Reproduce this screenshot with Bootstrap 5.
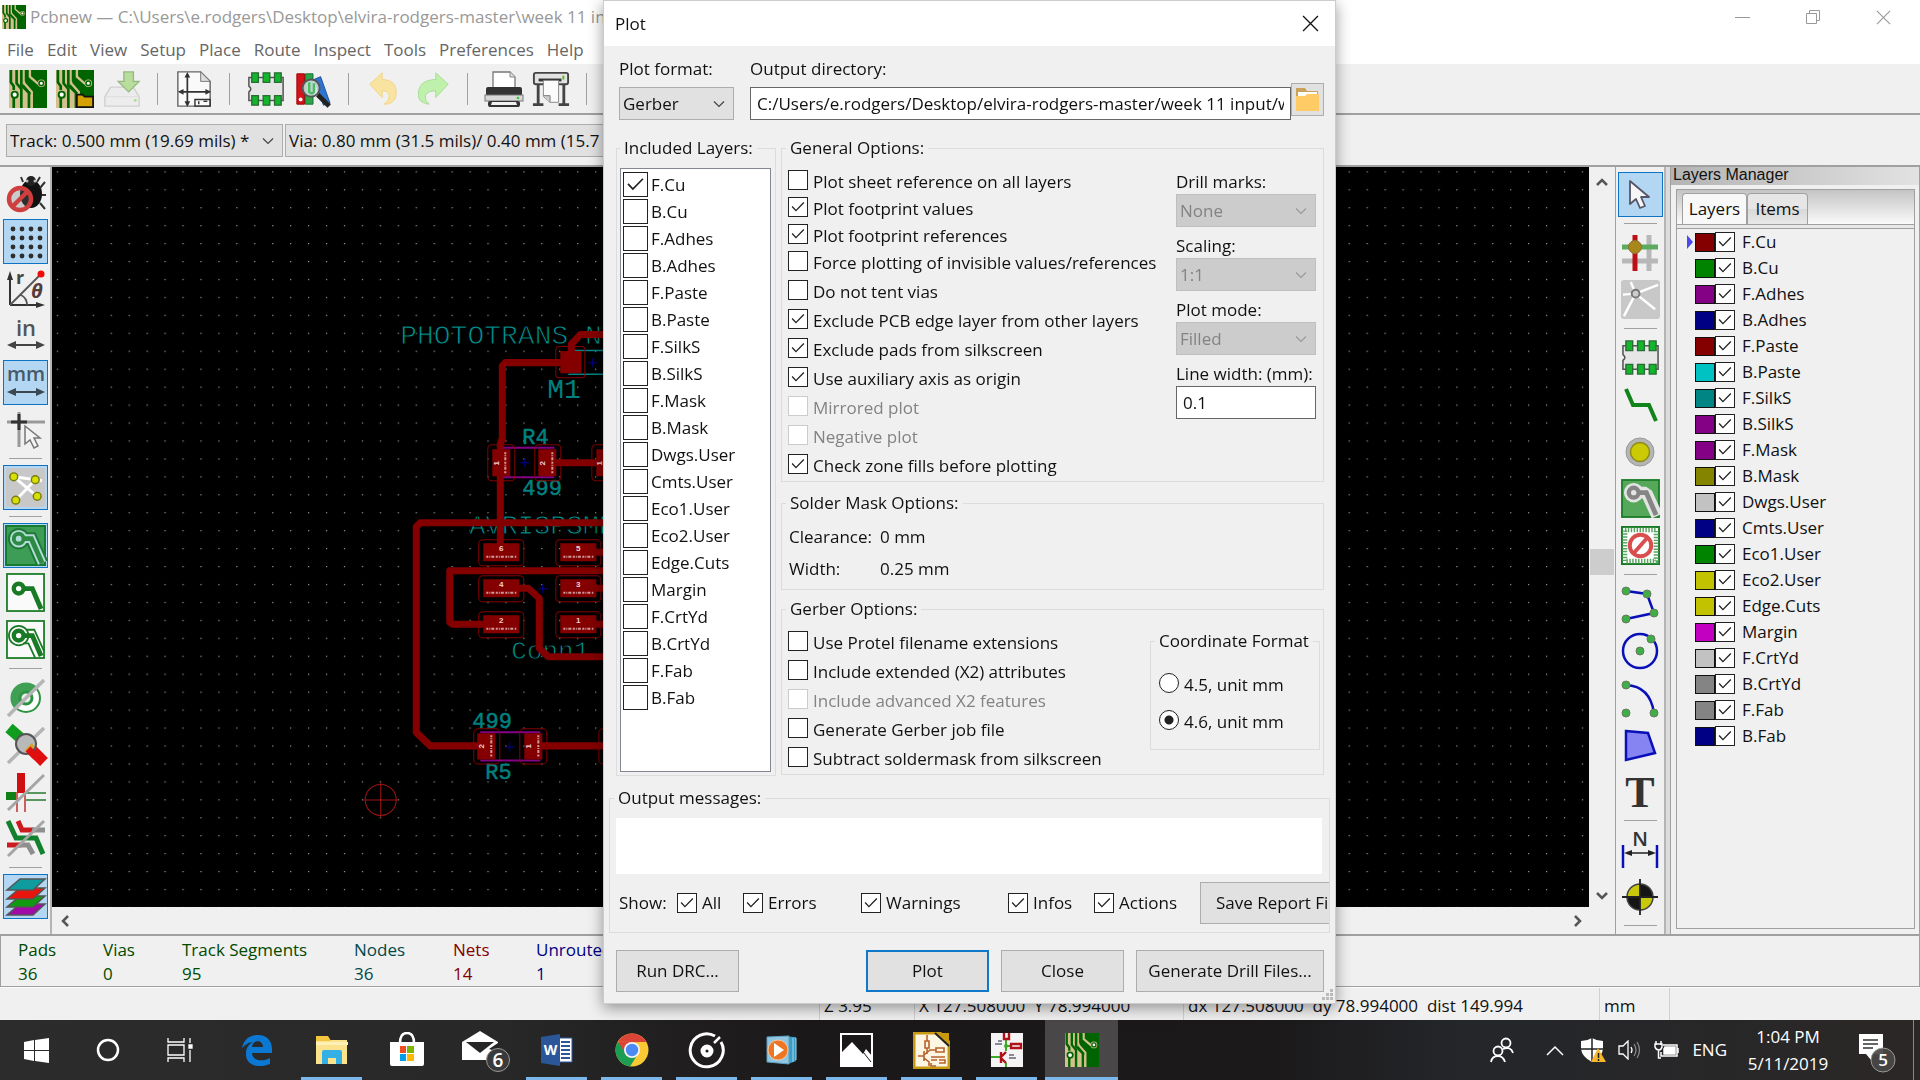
<!DOCTYPE html>
<html lang="en">
<head>
<meta charset="utf-8">
<meta name="viewport" content="width=device-width, initial-scale=1">
<title>Pcbnew</title>
<link href="https://cdn.jsdelivr.net/npm/bootstrap@5.3.0/dist/css/bootstrap.min.css" rel="stylesheet">
<style>
:root{--face:#f0f0f0;--line:#a0a0a0;--soft:#dcdcdc}
body{font-family:"Open Sans","Noto Sans",sans-serif;font-size:17px;line-height:24px;color:#111;background:var(--face);overflow:hidden}
svg{display:block;flex:none}
.tool svg{overflow:visible}
button,input,select{font:inherit;color:inherit}
label{cursor:default}
.titlebar{height:36px;padding:0 2px 2px}
.titlebar{color:#999}
.winctl{width:70px;height:32px;border:0;background:none;padding:0}
.menubar{height:28px;padding-left:7px;gap:13px}
.menubar a{color:#666;text-decoration:none}
.toolrow{height:51px;border-bottom:2px solid var(--line);background:var(--face);padding:0 5px;gap:2px}
.tool{width:45px;height:45px;padding:0;border:1px solid transparent;background:none;display:flex;align-items:center;justify-content:center;flex:none}
.tool.on{background:#b3d7f3;border-color:#0f73c4}
.hsep{width:23px;height:32px;flex:none;display:flex;justify-content:center}
.hsep::before{content:"";width:1px;background:var(--line)}
.vsep{height:9px;width:33px;flex:none;display:flex;align-items:center}
.vsep::before{content:"";height:1px;width:100%;background:var(--line)}
.comborow{height:50px;padding:9px 6px 0;gap:2px}
.pick{height:33px;border:1px solid #adadad;border-radius:0;background-color:#e1e1e1;padding:0 32px 0 3px;font-size:17px;line-height:24px;color:#111;background-size:12px 12px;background-position:right 8px center;background-image:url("data:image/svg+xml,%3Csvg xmlns='http://www.w3.org/2000/svg' viewBox='0 0 12 12'%3E%3Cpath d='M1 3.5l5 5 5-5' fill='none' stroke='%23444' stroke-width='1.2'/%3E%3C/svg%3E")}
.pick:disabled{background-color:#ccc;border-color:#bfbfbf;color:#838383;opacity:1;background-image:url("data:image/svg+xml,%3Csvg xmlns='http://www.w3.org/2000/svg' viewBox='0 0 12 12'%3E%3Cpath d='M1 3.5l5 5 5-5' fill='none' stroke='%23999' stroke-width='1.2'/%3E%3C/svg%3E")}
.trackpick{width:277px}.viapick{width:460px}
.work{border-top:2px solid var(--line);border-bottom:2px solid var(--line)}
.vbar{width:52px;padding:5px 2px 0 3px;gap:2px;border-right:2px solid #b4b4b4}
.vbar.rt{width:51px;padding:5px 2px 0;border-left:1px solid var(--line)}
.board{background:#000}
.vscroll{width:26px;padding:10px 1px 6px}
.vthumb{height:26px;background:#cdcdcd}
.above{flex:8 1 0}.below{flex:7 1 0}
.hscroll{height:27px;padding:0 28px 0 8px}
.panel{width:250px;border-left:1px solid var(--line);border-right:1px solid var(--line);margin-left:4px}
.split{background:#dcdcdc}
.panelhead{font-family:"Liberation Sans",sans-serif;font-size:16px;line-height:16px;height:18px;padding-left:2px;background:linear-gradient(90deg,#b4b4b4,#e2e2e2)}
.notebook{margin:4px 4px 5px 5px;border:1px solid var(--line)}
.tabstrip{height:35px;background:linear-gradient(#c4c4c4,#fafafa);border-bottom:1px solid var(--line);padding:3px 0 0 5px}
.tabstrip .tabbtn{border:1px solid var(--line);border-bottom:0;border-radius:4px 4px 0 0;padding:0;width:61px;background:linear-gradient(#e6e6e6 50%,#d8d8d8 50%,#e8e8e8)}
.tabstrip .tabbtn.on{width:65px;background:#f8f8f8}
.undertab{height:4px;background:#e8e8e8;border-bottom:1px solid var(--line)}
.lrow{height:26px;padding-left:9px}
.lrow .arrow{width:9px}
.lrow label{margin-left:7px}
.swatch{width:20px;height:19px;border:1px solid #111}
.tick.form-check-input,.dot.form-check-input{width:20px;height:20px;margin:0;flex:none;border:1px solid #222;border-radius:0;background-color:#fff;background-size:100% 100%;float:none}
.tick.form-check-input:checked{background-color:#fff;background-image:url("data:image/svg+xml,%3Csvg xmlns='http://www.w3.org/2000/svg' viewBox='0 0 20 20'%3E%3Cpath d='M3.5 9.5l4.2 4.5L16.5 5' fill='none' stroke='%23222' stroke-width='1.5'/%3E%3C/svg%3E")}
.tick.form-check-input:disabled{opacity:1;border-color:#ccc}
.tick.big{width:25px;height:25px}
.dot.form-check-input{border-radius:50%}
.dot.form-check-input:checked{background-color:#fff;background-image:radial-gradient(circle,#222 0 4px,#fff 5px)}
.infobox{border:1px solid var(--line);border-top:0;height:51px;padding:2px 17px}
.statusbar{height:33px;border-top:1px solid #fafafa}
.statusbar span{border-left:1px solid #d0d0d0;padding:6px 0 0 4px;white-space:pre}
.info-a{width:85px}.info-b{width:79px}.info-c{width:172px}.info-d{width:99px}.info-e{width:83px}
.g1{color:#004a00}.g2{color:#00484a}.g3{color:#840000}.g4{color:#000084}
.s1{width:95px}.s2{width:269px}.s3{width:416px}.s4{width:70px}.s5{width:251px}
.task{height:60px;background:linear-gradient(90deg,#2c2c2d 0,#282829 26%,#1b1819 42%,#1b191a 66%,#24262a 76%,#282728 90%,#2b2726);color:#fff}
.tb{width:73px;height:60px;border:0;padding:0 0 0;background:none;display:flex;align-items:center;justify-content:center;flex:none}
.tb.sys{width:72px}
.apps{gap:2px;padding-left:4px}
.tb.run{background:linear-gradient(#7bb7ea,#7bb7ea) center bottom/61px 3px no-repeat}
.tb.live{background:linear-gradient(#7bb7ea,#7bb7ea) center bottom/73px 3px no-repeat #4a4748}
.tray{gap:12px}
.clock{width:90px;line-height:27px}
.notes{margin-left:12px}
.edge-line{width:7px;height:60px;border-left:1px solid #888}
.dlg{position:fixed;left:603px;top:0;width:733px;background:var(--face);border:1px solid #ccc;box-shadow:0 4px 14px rgba(0,0,0,.4);z-index:5}
.dlghead{height:45px;background:#fff;padding:0 12px 0 11px}
.dlghead button{border:0;background:none;padding:0 4px}
.dlgbody{padding:11px 11px 11px 12px}
.box{height:33px;border:1px solid #666;border-radius:0;padding:0 6px;background:#fff;font-size:17px;line-height:24px;color:#111}
.fmt{width:115px;margin-left:3px}
.fieldname{display:block;margin-bottom:6px}
.push{height:42px;border:1px solid #adadad;border-radius:0;background:#e1e1e1;padding:0;font-size:17px;width:123px;flex:none;color:#111}
.push:hover{background:#e5f1fb;color:#111}
.push.main{border:2px solid #0f78c8}
.push.wide{width:188px}
.push.save{width:160px;padding-left:15px;text-align:left}
.dirbtn{width:33px;height:33px;padding:0;border:1px solid #adadad;background:#e1e1e1}
.grp{border:1px solid var(--soft);min-width:0}
.grp>legend{float:none;width:auto;font-size:17px;line-height:24px;margin:0 0 0 4px;padding:0 4px}
.inc{width:160px;padding:0 4px 3px 3px}
.inc>legend{margin-left:0}
.inc .listbox{border:1px solid #828790;background:#fff;height:604px;margin-top:8px;padding:2px}
.inc .item{height:27px;gap:3px}
.rightcol{margin-left:5px}
.gen{padding:8px 7px 0 6px}
.opt{gap:5px;height:29px;line-height:27px}
.opt.tight{height:27px}
.opt .form-check-input{margin-top:2px}
.side{width:140px;padding-top:2px}
.side .pick,.side .box{margin-bottom:7px;width:140px}
.off{color:#838383}
.mask{margin-top:9px}
.gerb{margin-top:7px}
.sm{padding:10px 8px 8px 7px}
.sm .k{width:91px}
.coord{width:170px;height:121px;padding:12px 0 0 8px;margin-right:-4px}
.coord>legend{margin-left:-4px}
.coord .rr{height:37px;gap:5px}
.msgs{margin:10px -6px 0 -7px;padding:8px 0 8px}
.msgs textarea{height:56px;border:0;background:#fff;resize:none;margin:0 7px 0 6px;width:calc(100% - 13px);padding:0}
.showrow{margin-top:8px;padding-left:9px;overflow:hidden;height:42px}
.showrow .sc{gap:5px}
.w0{width:58px}.w1{width:66px}.w2{width:118px}.w3{width:147px}.w4{width:86px}.w5{width:106px}
.acts{margin-top:17px}
.grip{position:absolute;right:2px;bottom:3px}
</style>
</head>
<body class="vh-100 d-flex flex-column">

<svg width="0" height="0" class="position-absolute" aria-hidden="true">
<defs>
<symbol id="pcb" viewBox="0 0 40 40"><rect width="40" height="40" fill="#006400"/><path d="M0 0h24v6l5 5v17l-5 0v12H0z" fill="#d2c08e"/><path d="M26 0h14v40H24V27l-9-8V0" fill="#006400"/><g fill="none" stroke="#d2c08e" stroke-width="2.5"><path d="M22 0v7l8 7h4"/><path d="M16 0v14l8 9v17"/></g><g fill="none" stroke="#006400" stroke-width="2.8"><path d="M2 0v13l3 4v4"/><path d="M8 0v14l5 6v20"/><path d="M13 0v16l8 8v16"/><path d="M18 0v11l8 8h8"/><path d="M5 28v12"/></g><circle cx="34" cy="14" r="4" fill="#d2c08e"/><circle cx="34" cy="14" r="2.4" fill="#fff" stroke="#006400" stroke-width="1.5"/><circle cx="6" cy="26" r="3.2" fill="#fff" stroke="#006400" stroke-width="2"/></symbol>
<symbol id="foot" viewBox="0 0 40 40"><path d="M2 8h36v24H2v-9q4-3 0-6z" fill="#e6e6e6" stroke="#555" stroke-width="1.6"/><g fill="#12b52c" stroke="#2b6b35" stroke-width="1.4"><path d="M5 3h7v10H5zM17 3h7v10h-7zM29 3h7v10h-7zM5 27h7v10H5zM17 27h7v10h-7zM29 27h7v10h-7z"/></g></symbol>
<symbol id="zone" viewBox="0 0 40 40"><path d="M11 14h13l3 2 10 22" fill="none" stroke="#e4e4e4" stroke-width="12"/><circle cx="13" cy="14" r="10" fill="#e4e4e4"/><path d="M13 14h13l10 23" fill="none" stroke="currentColor" stroke-width="5"/><circle cx="13" cy="14" r="5" fill="#e4e4e4" stroke="currentColor" stroke-width="4.5"/></symbol>
<symbol id="x16" viewBox="0 0 16 16"><path d="M1 1l14 14M15 1L1 15" stroke="currentColor" stroke-width="1.2" fill="none"/></symbol>
</defs>
</svg>

<div class="titlebar bg-white d-flex align-items-center">
  <svg width="24" height="24"><use href="#pcb"/></svg>
  <span class="ms-1">Pcbnew — C:\Users\e.rodgers\Desktop\elvira-rodgers-master\week 11 input</span>
  <div class="ms-auto d-flex">
    <button class="winctl" aria-label="Minimize"><svg class="m-auto" width="16" height="16"><path d="M0 8.500h15" stroke="#999"/></svg></button>
    <button class="winctl" aria-label="Restore"><svg class="m-auto" width="16" height="16" fill="none" stroke="#999"><path d="M1.500 4.500h10v10h-10zM4.500 4V1.500h10v10H12"/></svg></button>
    <button class="winctl" aria-label="Close"><svg class="m-auto" width="15" height="15" color="#999"><use href="#x16"/></svg></button>
  </div>
</div>
<nav class="menubar bg-white d-flex align-items-center" aria-label="Main menu">
  <a href="#">File</a><a href="#">Edit</a><a href="#">View</a><a href="#">Setup</a><a href="#">Place</a><a href="#">Route</a><a href="#">Inspect</a><a href="#">Tools</a><a href="#">Preferences</a><a href="#">Help</a>
</nav>

<div class="toolrow d-flex align-items-center">
  <button class="tool" aria-label="New board"><svg width="38" height="38"><use href="#pcb"/></svg></button>
  <button class="tool" aria-label="Open board"><svg width="38" height="38" viewBox="0 0 40 40"><use href="#pcb"/><path d="M22 26h6l2 2h9v11H22z" fill="#d3a306" stroke="#111" stroke-width="1.8"/></svg></button>
  <button class="tool" aria-label="Save"><svg width="38" height="38" viewBox="0 0 40 40"><path d="M8 18h24l6 10v10H2V28z" fill="#ececec" stroke="#d0d0d0" stroke-width="1.5"/><path d="M2 28h36" stroke="#ddd"/><path d="M22 2h10v10h6L27 23 16 12h6z" fill="#b9dd9a" stroke="#96b882" stroke-width="1.4"/><circle cx="34" cy="32" r="1.500" fill="#a8e090"/></svg></button>
  <span class="hsep"></span>
  <button class="tool" aria-label="Page settings"><svg width="38" height="38" viewBox="0 0 40 40"><path d="M3 2h24l10 10v26H3z" fill="#fafafa" stroke="#666" stroke-width="1.500"/><path d="M27 2v10h10z" fill="#ddd" stroke="#777"/><path d="M13 5v31M5 23h31" stroke="#333" stroke-width="1.800"/><path d="M13 2l-3 6h6zM13 39l-3-6h6zM3 23l6-3v6zM38 23l-6-3v6z" fill="#333"/><path d="M21 31h16v7H21zM25 33v3M30 33h4" fill="none" stroke="#333" stroke-width="1.500"/></svg></button>
  <span class="hsep"></span>
  <button class="tool" aria-label="Footprint editor"><svg width="38" height="38"><use href="#foot"/></svg></button>
  <button class="tool" aria-label="Footprint viewer"><svg width="38" height="38" viewBox="0 0 40 40"><path d="M3 4h8v32H3z" fill="#d3121c" stroke="#900"/><path d="M12 4h8v32h-8z" fill="#2aa64a" stroke="#186b2d"/><path d="M21 10l7-3 10 28-7 2z" fill="#2f74d0" stroke="#1d4f96"/><circle cx="18" cy="19" r="9" fill="#cfe3df" fill-opacity=".85" stroke="#555" stroke-width="2"/><path d="M16 13v10q3 3 5 0v-9" fill="none" stroke="#4fb868" stroke-width="2.500"/><path d="M25 26l12 12" stroke="#222" stroke-width="5"/><circle cx="7" cy="31" r="2" fill="#fff"/></svg></button>
  <span class="hsep"></span>
  <button class="tool" aria-label="Undo"><svg width="38" height="38" viewBox="0 0 40 40"><path d="M4 15L17 3v7c12 0 17 8 14 19-2 5-6 7-12 7 7-5 8-14-2-14v7z" fill="#f8e3a0" stroke="#f0d584"/></svg></button>
  <button class="tool" aria-label="Redo"><svg width="38" height="38" viewBox="0 0 40 40"><path d="M37 15L24 3v7C11 10 4 17 6 29c1 4 5 6 11 7-7-7-5-14 7-14v7z" fill="#bff0ac" stroke="#a4dd92"/></svg></button>
  <span class="hsep"></span>
  <button class="tool" aria-label="Print"><svg width="40" height="40" viewBox="0 0 40 40"><path d="M9 20V3h17l5 5v12z" fill="#fff" stroke="#777" stroke-width="1.300"/><path d="M26 3v5h5" fill="#ddd" stroke="#888"/><rect x="2" y="18" width="36" height="9" rx="2" fill="#333"/><rect x="1" y="26" width="38" height="6" fill="#d8d8d8" stroke="#777"/><rect x="4" y="32" width="32" height="6" rx="2" fill="#333"/><path d="M8 33h24l1 3H7z" fill="#f2f2f2"/><circle cx="34" cy="29" r="1.300" fill="#3c3"/></svg></button>
  <button class="tool" aria-label="Plot"><svg width="38" height="38" viewBox="0 0 40 40"><path d="M5 14h3v22H5zM32 14h3v22h-3zM1 35h11v3H1zM28 35h11v3H28z" fill="#444"/><rect x="2" y="3" width="36" height="12" rx="2" fill="#e2e2e2" stroke="#444" stroke-width="2"/><rect x="7" y="9" width="24" height="3" fill="#333"/><path d="M12 11h16v23h-9l-7-6z" fill="#fbfbfb" stroke="#888"/><path d="M12 27h7v7" fill="#ccc" stroke="#777"/><path d="M33 6v4" stroke="#5b2" stroke-width="2"/></svg></button>
  <span class="hsep"></span>
</div>
<div class="comborow d-flex">
  <select class="form-select pick trackpick" aria-label="Track width"><option>Track: 0.500 mm (19.69 mils) *</option></select>
  <select class="form-select pick viapick" aria-label="Via size"><option>Via: 0.80 mm (31.5 mils)/ 0.40 mm (15.7 mils) *</option></select>
</div>

<main class="work d-flex flex-grow-1">
  <div class="vbar d-flex flex-column align-items-center" role="toolbar" aria-label="Display options">
    <button class="tool" aria-label="DRC off"><svg width="40" height="40" viewBox="0 0 40 40"><ellipse cx="25" cy="19" rx="11" ry="14" fill="#111"/><path d="M17 7l-2-5M31 7l3-5M34 13l5-6M36 20h4M34 28l5 6" stroke="#333" stroke-width="2"/><circle cx="25" cy="6" r="5" fill="#222"/><circle cx="21" cy="6" r="1.500" fill="#bbb"/><circle cx="29" cy="6" r="1.500" fill="#bbb"/><circle cx="14" cy="24" r="11" fill="#777" fill-opacity=".3" stroke="#cf3f3f" stroke-width="4.500"/><path d="M6 16L22 32" stroke="#cf3f3f" stroke-width="4.500" transform="matrix(1 0 0 -1 0 48)"/></svg></button>
    <button class="tool on" aria-label="Show grid"><svg width="40" height="40" viewBox="0 0 40 40" id="gridicon" fill="#2d2d2d"></svg></button>
    <button class="tool" aria-label="Polar coordinates"><svg width="40" height="40" viewBox="0 0 40 40"><path d="M4 36V6M4 36h31" stroke="#333" stroke-width="2"/><path d="M4 2L1 11h6zM39 36l-9-3v6z" fill="#333"/><path d="M4 36L34 6M15 26q6 3 6 10" stroke="#555" stroke-width="1.800" fill="none"/><circle cx="35" cy="5" r="3.500" fill="#f00a0a"/><text x="10" y="15" font-size="18" font-weight="700" fill="#444">r</text><text x="25" y="29" font-size="20" font-style="italic" font-weight="700" fill="#553c3c">θ</text></svg></button>
    <button class="tool" aria-label="Inches"><svg width="40" height="40" viewBox="0 0 40 40"><text x="20" y="20" font-size="22" font-weight="600" text-anchor="middle" fill="#555">in</text><path d="M6 29h28" stroke="#444" stroke-width="2"/><path d="M1 29l9-4v8zM39 29l-9-4v8z" fill="#444"/></svg></button>
    <button class="tool on" aria-label="Millimeters"><svg width="40" height="40" viewBox="0 0 40 40"><text x="20" y="18" font-size="20" font-weight="600" text-anchor="middle" fill="#47596a">mm</text><path d="M6 29h28" stroke="#3c4650" stroke-width="2"/><path d="M1 29l9-4v8zM39 29l-9-4v8z" fill="#3c4650"/></svg></button>
    <button class="tool" aria-label="Cursor shape"><svg width="40" height="40" viewBox="0 0 40 40"><path d="M13 2v35M1 12h38" stroke="#999" stroke-width="3"/><path d="M13 4v16M5 12h16" stroke="#333" stroke-width="3"/><path d="M19 16v18l5-4 4 8 4-2-4-8h6z" fill="#f4f4f4" stroke="#777" stroke-width="1.500"/></svg></button>
    <span class="vsep"></span>
    <button class="tool on" aria-label="Ratsnest"><svg width="39" height="39" viewBox="0 0 40 40"><rect width="40" height="40" rx="2" fill="#c8c8c8"/><path d="M8 9l29 4M8 9l24 20M10 33L30 12" stroke="#fff" stroke-width="3"/><g fill="#d8e000" stroke="#777c10" stroke-width="1.500"><circle cx="8" cy="9" r="4"/><circle cx="30" cy="12" r="4"/><circle cx="32" cy="29" r="4"/><circle cx="10" cy="33" r="4"/></g></svg></button>
    <span class="vsep"></span>
    <button class="tool on" aria-label="Show filled zones"><svg width="39" height="39" viewBox="0 0 40 40"><rect width="40" height="40" fill="#3d9c56" stroke="#147a2c" stroke-width="2"/><path d="M13 13h13l11 25" fill="none" stroke="#1c7a34" stroke-width="13"/><circle cx="13" cy="13" r="11" fill="#1c7a34"/><path d="M13 13h13l11 25" fill="none" stroke="#b3dcd8" stroke-width="9"/><circle cx="13" cy="13" r="9" fill="#b3dcd8"/><path d="M13 13h13l11 25" fill="none" stroke="#2c8a45" stroke-width="5"/><circle cx="13" cy="13" r="5" fill="#b3dcd8" stroke="#2c8a45" stroke-width="4"/></svg></button>
    <button class="tool" aria-label="Hide zones"><svg width="39" height="39" viewBox="0 0 40 40"><rect x="1" y="1" width="38" height="38" fill="#fafafa" stroke="#187a24" stroke-width="1.800"/><path d="M14 16h13l9 21" fill="none" stroke="#187a24" stroke-width="5"/><circle cx="13" cy="16" r="5" fill="#fff" stroke="#187a24" stroke-width="4.500"/></svg></button>
    <button class="tool" aria-label="Zone outlines"><svg width="39" height="39" viewBox="0 0 40 40"><rect x="1" y="1" width="38" height="38" fill="#fafafa" stroke="#187a24" stroke-width="1.800"/><circle cx="13" cy="16" r="10" fill="none" stroke="#187a24" stroke-width="1.800"/><path d="M21 10h8l10 22M18 24h5l7 15" fill="none" stroke="#187a24" stroke-width="1.800"/><path d="M14 16h13l9 21" fill="none" stroke="#187a24" stroke-width="5"/><circle cx="13" cy="16" r="5" fill="#fff" stroke="#187a24" stroke-width="4.500"/></svg></button>
    <span class="vsep"></span>
    <button class="tool" aria-label="Pad sketch"><svg width="40" height="40" viewBox="0 0 40 40"><circle cx="20" cy="20" r="14" fill="#fff" stroke="#2d9443" stroke-width="2"/><path d="M9 31A15 15 0 0 1 31 9z" fill="#3fa055"/><circle cx="20" cy="20" r="6" fill="#eee" stroke="#2d9443" stroke-width="3"/><path d="M2 38L38 2" stroke="#b5b5b5" stroke-width="3.500"/></svg></button>
    <button class="tool" aria-label="Via sketch"><svg width="40" height="40" viewBox="0 0 40 40"><path d="M3 3l16 14" stroke="#109c1c" stroke-width="11"/><path d="M21 20l17 17" stroke="#df0f10" stroke-width="11"/><path d="M2 38L38 3" stroke="#b5b5b5" stroke-width="3.500"/><circle cx="20" cy="19" r="10" fill="#b9b9b9" stroke="#555" stroke-width="2"/><path d="M19 25l7-7 2 4-6 6z" fill="#dba21c"/><path d="M22 24l8 8" stroke="#df0f10" stroke-width="7"/></svg></button>
    <button class="tool" aria-label="Track sketch"><svg width="40" height="40" viewBox="0 0 40 40"><path d="M0 20h10v8H0z" fill="#108018"/><path d="M11 1h8v20h-8z" fill="#d00f10"/><path d="M11 20v20M19 20v20" stroke="#c03030" stroke-width="1.500"/><path d="M20 21h20M20 28h20" stroke="#287a30" stroke-width="1.500"/><path d="M2 38L38 3" stroke="#a5a5a5" stroke-width="3"/></svg></button>
    <button class="tool" aria-label="High contrast"><svg width="40" height="40" viewBox="0 0 40 40"><path d="M12 2l4 9h12M1 26h14" stroke="#cb1b1f" stroke-width="5" fill="none"/><path d="M26 11h13M14 26h8l5 9" stroke="#8e8e8e" stroke-width="5" fill="none"/><path d="M2 2l8 17h20l7 16" stroke="#11812d" stroke-width="5" fill="none"/><path d="M2 37L38 2" stroke="#a5a5a5" stroke-width="3"/></svg></button>
    <span class="vsep"></span>
    <button class="tool on" aria-label="Layers manager"><svg width="40" height="40" viewBox="0 0 40 40" stroke="#555" stroke-width="1.500"><path d="M1 38h26l12-11H14z" fill="#a20aa8"/><path d="M1 30h26l12-11H14z" fill="#0f9a12"/><path d="M1 22h26l12-11H14z" fill="#e8150f"/><path d="M1 13h26L39 2H14z" fill="#0e9c9e"/></svg></button>
  </div>

  <div class="d-flex flex-column flex-grow-1">
    <div class="d-flex flex-grow-1">
      <div class="board flex-grow-1 position-relative overflow-hidden">
        <svg class="position-absolute w-100 h-100" viewBox="52 167 1536 740" preserveAspectRatio="xMinYMin slice" role="img" aria-label="Board layout">
          <defs>
            <pattern id="dots" x="397.500" y="314.700" width="17.930" height="17.930" patternUnits="userSpaceOnUse"><rect width="1.200" height="1.200" fill="#9a9a9a"/></pattern>
          </defs>
          <rect x="51" y="167" width="1537" height="740" fill="url(#dots)"/>
          <g fill="#009491" stroke="#000" stroke-width=".9" font-family="Liberation Mono, monospace" font-size="28">
            <text x="400" y="344">PHOTOTRANS N</text><text x="469" y="534" font-size="27">AVRISPSMD</text><text x="511" y="659" font-size="26">Conn1</text>
          </g>
          <g fill="#00817f" font-family="Liberation Mono, monospace" font-size="22">
            <text x="547" y="398" font-size="28">M1</text>
            <g stroke="#00817f" stroke-width=".5"><text x="522" y="444">R4</text><text x="522" y="495">499</text><text x="472" y="728">499</text><text x="485" y="779">R5</text></g>
          </g>
          <g fill="none" stroke="#008484" stroke-width="1.500"><path d="M568 350.500h50M568 374h50"/></g>
          <g fill="none" stroke="#840084" stroke-width="2"><path d="M497 447.500h57M497 477h57M480 732h60M480 760h60"/></g>
          <g fill="none" stroke="#840000" stroke-width="7" stroke-linejoin="round" stroke-linecap="round">
            <path d="M620 334.500H580L571 344v18M565 362.500H505l-3 3V438l-2 6V548M620 522.500H420l-4 4V732l14 13.500h55M620 570.500H449.500V622l3 2H488M515 588h13l11 10v50l9 8.500h80M550 462.500h60M535 745.500h80M590 552h30M590 588h30M590 624h30"/>
          </g>
          <g fill="#840000"><path d="M560 351h21v22h-21zM492 449h18v27h-18zM538 449h18v27h-18zM596 449h18v27h-18zM477 733h18v26h-18zM524 733h18v26h-18zM483 543h36v18h-36zM483 579h36v18h-36zM483 615h36v18h-36zM560 543h36v18h-36zM560 579h36v18h-36zM560 615h36v18h-36z"/></g>
          <g fill="none" stroke="#840000"><rect x="555.500" y="346.500" width="29" height="31" rx="3"/><rect x="487.500" y="444.500" width="27" height="36" rx="4"/><rect x="534.500" y="444.500" width="26" height="36" rx="4"/><rect x="591.500" y="444.500" width="26" height="36" rx="4"/><rect x="473.500" y="728.500" width="26" height="35" rx="4"/><rect x="519.500" y="728.500" width="27" height="35" rx="4"/><rect x="598.500" y="728.500" width="27" height="35" rx="4"/><rect x="478.500" y="539.500" width="45" height="26" rx="4"/><rect x="478.500" y="575.500" width="45" height="26" rx="4"/><rect x="478.500" y="611.500" width="45" height="26" rx="4"/><rect x="555.500" y="539.500" width="45" height="26" rx="4"/><rect x="555.500" y="575.500" width="45" height="26" rx="4"/><rect x="555.500" y="611.500" width="45" height="26" rx="4"/></g>
          <g stroke="#000098" fill="none"><path d="M588 362.500h9M592.500 358v9M520 462.500h9M524.500 458v9M538 588.500h9M542.500 584v9M505 746.500h9M509.500 742v9"/></g>
          <g stroke="#d09a9a" stroke-width="2" stroke-dasharray="2 1 1 1 3 1.500"><path d="M486 556.500h30M486 592.500h30M486 628.500h30M563 556.500h30M563 592.500h30M563 628.500h30M505 452v22M552 452v22M491 735v22M538 735v22"/></g>
          <g fill="#f0d0d0" font-family="Liberation Sans, sans-serif" font-size="8" font-weight="700" text-anchor="middle">
            <text x="501" y="551">6</text><text x="578" y="551">5</text><text x="501" y="587">4</text><text x="578" y="587">3</text><text x="501" y="623">2</text><text x="578" y="623">1</text>
            <text transform="translate(499 463) rotate(-90)">1</text><text transform="translate(545 463) rotate(-90)">2</text><text transform="translate(602 463) rotate(-90)">1</text><text transform="translate(484 746) rotate(-90)">2</text><text transform="translate(531 746) rotate(-90)">1</text>
          </g>
          <g fill="none" stroke="#a01414"><circle cx="380.500" cy="799.500" r="15.500"/><path d="M363 799.500h35M380.500 782v35"/></g>
        </svg>
      </div>
      <div class="vscroll d-flex flex-column">
        <svg class="mx-auto" width="12" height="9"><path d="M1 8l5-5 5 5" fill="none" stroke="#555" stroke-width="2.500"/></svg>
        <div class="above"></div><div class="vthumb"></div><div class="below"></div>
        <svg class="mx-auto" width="12" height="9"><path d="M1 1l5 5 5-5" fill="none" stroke="#555" stroke-width="2.500"/></svg>
      </div>
    </div>
    <div class="hscroll d-flex align-items-center justify-content-between">
      <svg width="9" height="12"><path d="M8 1L3 6l5 5" fill="none" stroke="#555" stroke-width="2.500"/></svg>
      <svg class="me-1" width="9" height="12"><path d="M1 1l5 5-5 5" fill="none" stroke="#555" stroke-width="2.500"/></svg>
    </div>
  </div>

  <div class="vbar rt d-flex flex-column align-items-center" role="toolbar" aria-label="Drawing tools">
    <button class="tool on" aria-label="Select"><svg width="40" height="40" viewBox="0 0 40 40"><path d="M10 6v23l6-5 4 9 5-2-4-9h8z" fill="#f6f6f6" stroke="#556" stroke-width="1.800" stroke-linejoin="round"/></svg></button>
    <span class="vsep"></span>
    <button class="tool" aria-label="Highlight net"><svg width="40" height="40" viewBox="0 0 40 40"><path d="M29 2v36M2 28h36" stroke="#b8b8b8" stroke-width="5"/><path d="M15 2v36" stroke="#bd1016" stroke-width="5"/><path d="M2 14h36" stroke="#5cab5e" stroke-width="5"/><circle cx="15" cy="14" r="6.500" fill="#a8871b" stroke="#8b7430"/></svg></button>
    <button class="tool" aria-label="Local ratsnest"><svg width="39" height="39" viewBox="0 0 40 40"><rect width="40" height="40" rx="3" fill="#c8c8c8"/><path d="M15 14L3 37M15 14l20 16M15 14L38 5M15 14L2 15M15 14L10 2" stroke="#fff" stroke-width="2.500"/><circle cx="15" cy="14" r="4" fill="#ccc" stroke="#777" stroke-width="2"/></svg></button>
    <span class="vsep"></span>
    <button class="tool" aria-label="Add footprint"><svg width="39" height="39"><use href="#foot"/></svg></button>
    <button class="tool" aria-label="Route track"><svg width="40" height="40" viewBox="0 0 40 40"><path d="M6 4l7 16h16l7 16" fill="none" stroke="#11831b" stroke-width="4"/></svg></button>
    <button class="tool" aria-label="Add via"><svg width="40" height="40" viewBox="0 0 40 40"><circle cx="20" cy="20" r="12" fill="#cbca05" stroke="#b5b5b5" stroke-width="4"/><circle cx="20" cy="20" r="9.500" fill="none" stroke="#8c8c20" stroke-width="1.500"/><circle cx="20" cy="20" r="14" fill="none" stroke="#999"/></svg></button>
    <button class="tool" aria-label="Add zone"><svg width="39" height="39" viewBox="0 0 40 40" color="#858585"><rect x="1" y="1" width="38" height="38" fill="#55a85a" stroke="#187a24" stroke-width="1.800"/><use href="#zone"/></svg></button>
    <button class="tool" aria-label="Add keepout"><svg width="39" height="39" viewBox="0 0 40 40"><rect x="1" y="1" width="38" height="38" fill="#fff" stroke="#187a24" stroke-width="2"/><rect x="4" y="4" width="32" height="32" fill="none" stroke="#5aa564" stroke-width="5" stroke-dasharray="1.500 1.500"/><circle cx="20" cy="20" r="11" fill="#fff" stroke="#d94f4f" stroke-width="4"/><path d="M13 28l14-16" stroke="#d94f4f" stroke-width="4"/></svg></button>
    <span class="vsep"></span>
    <button class="tool" aria-label="Draw line"><svg width="40" height="40" viewBox="0 0 40 40"><path d="M6 7l21 3 7 19-28 6" fill="none" stroke="#0a10b8" stroke-width="2.500"/><g fill="#3fae49" stroke="#6a7a5c"><circle cx="6" cy="7" r="4"/><circle cx="27" cy="10" r="4"/><circle cx="34" cy="29" r="4"/><circle cx="6" cy="35" r="4"/></g></svg></button>
    <button class="tool" aria-label="Draw circle"><svg width="40" height="40" viewBox="0 0 40 40"><circle cx="20" cy="20" r="17" fill="none" stroke="#0a10b8" stroke-width="2.500"/><g fill="#3fae49" stroke="#6a7a5c"><circle cx="20" cy="20" r="4"/><circle cx="31" cy="8" r="4"/></g></svg></button>
    <button class="tool" aria-label="Draw arc"><svg width="40" height="40" viewBox="0 0 40 40"><path d="M6 7q24 1 28 28" fill="none" stroke="#0a10b8" stroke-width="2.500"/><g fill="#3fae49" stroke="#6a7a5c"><circle cx="6" cy="7" r="4"/><circle cx="34" cy="35" r="4"/><circle cx="6" cy="35" r="4"/></g></svg></button>
    <button class="tool" aria-label="Draw polygon"><svg width="40" height="40" viewBox="0 0 40 40"><path d="M6 6l22 2 7 20-29 7z" fill="#8584f2" stroke="#0a10b8" stroke-width="2.500"/></svg></button>
    <button class="tool" aria-label="Add text"><svg width="40" height="40" viewBox="0 0 40 40"><text x="20" y="35" font-family="Liberation Serif, serif" font-size="44" font-weight="700" text-anchor="middle" fill="#333">T</text></svg></button>
    <span class="vsep"></span>
    <button class="tool" aria-label="Add dimension"><svg width="40" height="40" viewBox="0 0 40 40"><text x="20" y="16" font-size="20" text-anchor="middle" fill="#333" font-weight="600">N</text><path d="M3 15v23M37 15v23" stroke="#0a10b8" stroke-width="2.500"/><path d="M8 23h24" stroke="#222" stroke-width="1.500"/><path d="M4 23l8-3v6zM36 23l-8-3v6z" fill="#222"/></svg></button>
    <button class="tool" aria-label="Layer target"><svg width="40" height="40" viewBox="0 0 40 40"><circle cx="20" cy="20" r="13" fill="#151515"/><path d="M20 20V7A13 13 0 0 0 7 20zM20 20v13a13 13 0 0 0 13-13z" fill="#c9c90c"/><circle cx="20" cy="20" r="13" fill="none" stroke="#444" stroke-width="1.500"/><path d="M20 2v36M2 20h36" stroke="#222" stroke-width="1.800"/></svg></button>
    <span class="vsep"></span>
  </div>

  <div class="split d-flex">
  <aside class="panel d-flex flex-column bg-body" style="--bs-body-bg-rgb:240,240,240">
    <div class="panelhead">Layers Manager</div>
    <div class="notebook flex-grow-1">
      <div class="tabstrip d-flex" role="tablist"><button class="tabbtn on" role="tab">Layers</button><button class="tabbtn" role="tab">Items</button></div>
      <div class="undertab"></div>
      <div id="manager"></div>
    </div>
  </aside>
  </div>
</main>

<section class="infobox d-flex" aria-label="Board statistics">
  <div class="info-a g1">Pads<br>36</div><div class="info-b g1">Vias<br>0</div><div class="info-c g1">Track Segments<br>95</div><div class="info-d g2">Nodes<br>36</div><div class="info-e g3">Nets<br>14</div><div class="g4">Unrouted<br>1</div>
</section>
<footer class="statusbar d-flex justify-content-end"><span class="s1">Z 3.95</span><span class="s2">X 127.508000  Y 78.994000</span><span class="s3">dx 127.508000  dy 78.994000  dist 149.994</span><span class="s4">mm</span><span class="s5"></span></footer>

<nav class="task d-flex align-items-center" aria-label="Taskbar">
  <button class="tb sys" aria-label="Start"><svg width="25" height="25" viewBox="0 0 25 25" fill="#fff"><path d="M0 4l10-2v10H0zM11 2l14-2v12H11zM0 13h10v10L0 21zM11 13h14v12l-14-2z"/></svg></button>
  <button class="tb sys" aria-label="Search"><svg width="24" height="24"><circle cx="12" cy="12" r="10" fill="none" stroke="#fff" stroke-width="2.500"/></svg></button>
  <button class="tb sys" aria-label="Task view"><svg width="26" height="24" fill="none" stroke="#fff" stroke-width="1.300"><path d="M1 0v4h16V0M1 24v-4h16v4M1 7h16v10H1zM23 0v5M23 12v12"/><path d="M22 7h3v3h-3z" fill="#fff"/></svg></button>
  <div class="apps d-flex">
    <button class="tb" aria-label="Edge"><svg width="32" height="32" viewBox="0 0 32 32"><path d="M1 14C3 5 9 1 17 1c9 0 14 6 14 14v4H11c0 8 11 9 18 5v6C17 35 4 31 5 19c0-5 3-9 7-11-4 0-8 3-11 6zm10-1h11c0-7-10-8-11 0z" fill="#0b78d4"/></svg></button>
    <button class="tb run" aria-label="File Explorer"><svg width="34" height="30" viewBox="0 0 34 30"><path d="M1 2h12l2 3h17v24H1z" fill="#fbe28d"/><path d="M1 1h12l3 5H1z" fill="#f4c63f"/><path d="M1 7h32v3H1z" fill="#fff0b5"/><path d="M7 29V17q0-2 2-2h16q2 0 2 2v12h-6v-6h-8v6z" fill="#35b0e6"/></svg></button>
    <button class="tb" aria-label="Store"><svg width="36" height="36" viewBox="0 0 36 36"><path d="M11 11C11 3 14 1 18 1s7 2 7 10" fill="none" stroke="#fff" stroke-width="2.500"/><path d="M1 10h34v22q0 2-2 2H3q-2 0-2-2z" fill="#fff"/><path d="M11 14h6v7h-6z" fill="#f04e1f"/><path d="M18 14h7v7h-7z" fill="#7cb800"/><path d="M11 22h6v7h-6z" fill="#009fe8"/><path d="M18 22h7v7h-7z" fill="#ffb800"/></svg></button>
    <button class="tb" aria-label="Mail, 6 unread"><svg class="ms-2" width="50" height="44" viewBox="0 0 50 44"><path d="M1 14L19 3l18 11v18H1z" fill="#fff"/><path d="M5 14h28L19 25z" fill="#262627"/><path d="M28 21l9-6v9z" fill="#262627"/><circle cx="37" cy="32" r="11.500" fill="#3a3a3b" stroke="#999"/><text x="37" y="39" font-size="19" font-weight="600" fill="#fff" text-anchor="middle">6</text></svg></button>
    <button class="tb run" aria-label="Word"><svg width="32" height="32" viewBox="0 0 32 32"><path d="M17 4h14v24H17z" fill="#fff" stroke="#2b579a"/><path d="M20 8h9M20 12h9M20 16h9M20 20h9M20 24h9" stroke="#2b579a" stroke-width="1.800"/><path d="M0 3l19-3v32L0 29z" fill="#2b579a"/><text x="9.500" y="21" font-size="14" font-weight="700" fill="#fff" text-anchor="middle">W</text></svg></button>
    <button class="tb run" aria-label="Chrome"><svg width="34" height="34" viewBox="0 0 34 34"><circle cx="17" cy="17" r="16.500" fill="#fbc934"/><path d="M3 8.500A16.500 16.500 0 0 1 31.500 9H17z" fill="#db4437"/><path d="M2.600 9A16.500 16.500 0 0 0 15 33.400L23 21 17 17z" fill="#1b9e54"/><path d="M3 8.500h28.500L17 9.500 10 20z" fill="#db4437"/><circle cx="17" cy="17" r="8" fill="#f4f4f4"/><circle cx="17" cy="17" r="6.200" fill="#4a8af4"/></svg></button>
    <button class="tb run" aria-label="Groove Music"><svg width="38" height="38" viewBox="0 0 38 38" fill="none" stroke="#fff" stroke-width="3"><path d="M27 5A16.500 16.500 0 1 0 33 11"/><circle cx="19" cy="20" r="4.500" fill="#fff" stroke-width="4"/><circle cx="19" cy="20" r="1.500" fill="#1e1c1d" stroke="none"/><path d="M26 12l6-6" stroke-width="2.500"/></svg></button>
    <button class="tb run" aria-label="Media Player"><svg width="32" height="32" viewBox="0 0 32 32"><path d="M10 2l20 1v24l-8 3z" fill="#3c9cc4"/><path d="M27 4v24M30 4v22" stroke="#9ed8ee"/><path d="M1 3l22-1v28L1 28z" fill="#8fc6e2" stroke="#5c9fbf"/><circle cx="12" cy="16" r="10" fill="#ee7623" stroke="#f8c59c"/><path d="M8 9l10 7-10 7z" fill="#fff"/></svg></button>
    <button class="tb run" aria-label="Photos"><svg width="33" height="34" viewBox="0 0 33 34"><path d="M1 1h31v32H1z" fill="none" stroke="#fff" stroke-width="2"/><path d="M1 33V20L12 9l11 12 0 0 3-5 6 7v10z" fill="#fff"/><path d="M20 15l11 14" stroke="#1b1819"/></svg></button>
    <button class="tb run" aria-label="KiCad"><svg width="37" height="37" viewBox="0 0 37 37"><path d="M1 1h26l9 9v26H1z" fill="#fdf6e2" stroke="#c99a10" stroke-width="3"/><path d="M21 1h15v14z" fill="#c99a10"/><path d="M22 1l14 13" stroke="#222" stroke-width="2"/><g fill="none" stroke="#b8632c" stroke-width="1.600"><path d="M14 3v6M12 9h4v7h-4zM14 16v6M5 24h6M11 19v10M11 23l6-5h6M11 26l5 4v4M23 16h8v4h-8zM18 25h14M18 28h6M26 28h6v3h-6M18 31v3h5"/></g></svg></button>
    <button class="tb run" aria-label="Eeschema"><svg width="34" height="34" viewBox="0 0 34 34"><path d="M1 0h32v34H1z" fill="#f4f4f4"/><path d="M16 6v12M1 24h10M16 13h5M16 30v4" stroke="#3cab2a" stroke-width="2"/><g fill="none" stroke="#b0121a" stroke-width="2.400"><path d="M14 0v6h5V0M21 11h10v4H21zM11 19v11M11 24l5-5M11 25l5 5"/></g><path d="M5 11h7M8 8h4M19 22h5M19 25h7" stroke="#667" stroke-width="1.500"/><circle cx="16" cy="13" r="2" fill="#3cab2a"/></svg></button>
    <button class="tb live" aria-label="Pcbnew"><svg width="34" height="38"><use href="#pcb"/></svg></button>
  </div>
  <div class="tray ms-auto d-flex align-items-center">
    <svg width="24" height="26" fill="none" stroke="#fff" stroke-width="1.800"><circle cx="16" cy="6" r="4.500"/><circle cx="8" cy="14" r="4.500"/><path d="M1 25q1-6 7-6 5 0 7 6M13 12q8-3 10 4"/></svg>
    <span class="px-1"></span>
    <svg class="me-1" width="18" height="11"><path d="M1 10l8-8 8 8" fill="none" stroke="#fff" stroke-width="1.500"/></svg>
    <svg width="26" height="26"><path d="M12 1q5 3 11 3v8q-1 8-11 13Q2 20 1 12V4q6 0 11-3z" fill="#fff"/><path d="M12 1v24M1 12h22" stroke="#222" stroke-width="1.500"/><path d="M18 11l8 14H11z" fill="#f6b72c"/><path d="M18.500 16v5M18.500 22v2" stroke="#222" stroke-width="1.500"/></svg>
    <svg width="24" height="20" fill="none" stroke="#fff" stroke-width="1.300"><path d="M1 6h4l5-5v18l-5-5H1z"/><path d="M13 7q2 3 0 6"/><path d="M16 4q4 6 0 12M19 2q5 8 0 16" stroke="#888"/></svg>
    <svg width="26" height="20" fill="none" stroke="#fff" stroke-width="1.500"><path d="M9 5h14v11H7v-4"/><path d="M11 7h10v7H10V9z" fill="#fff"/><path d="M24 8v5M2 1v4M7 1v4M1 4h7v3q-1 3-3 3-3 0-4-3zM4.500 10v8H7"/></svg>
    <span>ENG</span>
    <div class="clock text-center ms-1">1:04 PM<br>5/11/2019</div>
    <svg class="notes" width="44" height="46" viewBox="0 0 44 46"><path d="M2 7h24v20H16l-2 6-5-6H2z" fill="#fff"/><path d="M6 13h15M6 17h15M6 21h10" stroke="#333" stroke-width="1.500"/><circle cx="26" cy="33" r="12" fill="#4a4747" fill-opacity=".92" stroke="#999"/><text x="26" y="39" font-size="17" font-weight="600" fill="#fff" text-anchor="middle">5</text></svg>
    <span class="edge-line"></span>
  </div>
</nav>

<div class="dlg" role="dialog" aria-label="Plot">
  <div class="dlghead d-flex align-items-center justify-content-between"><span>Plot</span><button aria-label="Close dialog"><svg width="17" height="17"><use href="#x16"/></svg></button></div>
  <form class="dlgbody" onsubmit="return false">
    <div class="d-flex align-items-end">
      <div class="fmt"><label for="fmt" class="fieldname">Plot format:</label><select id="fmt" class="form-select pick w-100"><option>Gerber</option></select></div>
      <div class="flex-grow-1 ms-3"><label for="dir" class="fieldname">Output directory:</label><input id="dir" class="form-control box" value="C:/Users/e.rodgers/Desktop/elvira-rodgers-master/week 11 input/week 11/gerber"></div>
      <button class="dirbtn mb-1" aria-label="Browse"><svg class="m-auto" width="23" height="23" viewBox="0 0 23 23"><path d="M0 0h9l2 3h11v20H0z" fill="#c9a35c"/><path d="M2 4h19v5H2z" fill="#fff"/><path d="M0 8h9l2-2h12v17H0z" fill="#ffcb67"/></svg></button>
    </div>
    <div class="d-flex mt-3">
      <fieldset class="grp inc flex-shrink-0"><legend>Included Layers:</legend><div class="listbox" id="included"></div></fieldset>
      <div class="flex-grow-1 rightcol">
        <fieldset class="grp"><legend>General Options:</legend>
          <div class="gen d-flex justify-content-between">
            <div id="general"></div>
            <div class="side">
              <label for="drill" class="d-block">Drill marks:</label><select id="drill" class="form-select pick" disabled><option>None</option></select>
              <label for="scale" class="d-block">Scaling:</label><select id="scale" class="form-select pick" disabled><option>1:1</option></select>
              <label for="mode" class="d-block">Plot mode:</label><select id="mode" class="form-select pick" disabled><option>Filled</option></select>
              <label for="lw" class="d-block text-nowrap">Line width: (mm):</label><input id="lw" class="form-control box" value="0.1">
            </div>
          </div>
        </fieldset>
        <fieldset class="grp mask"><legend>Solder Mask Options:</legend>
          <div class="sm"><div class="d-flex mb-2"><span class="k">Clearance:</span><span>0 mm</span></div><div class="d-flex"><span class="k">Width:</span><span>0.25 mm</span></div></div>
        </fieldset>
        <fieldset class="grp gerb"><legend>Gerber Options:</legend>
          <div class="gen d-flex justify-content-between">
            <div id="gerber"></div>
            <fieldset class="grp coord"><legend class="text-nowrap">Coordinate Format</legend>
              <div class="rr d-flex"><input class="form-check-input dot mt-2" type="radio" name="cf" id="cf45"><label for="cf45" class="mt-2">4.5, unit mm</label></div>
              <div class="rr d-flex"><input class="form-check-input dot mt-2" type="radio" name="cf" id="cf46" checked><label for="cf46" class="mt-2">4.6, unit mm</label></div>
            </fieldset>
          </div>
        </fieldset>
      </div>
    </div>
    <fieldset class="grp msgs"><legend>Output messages:</legend>
      <textarea class="d-block" aria-label="Output messages" readonly></textarea>
      <div class="showrow d-flex align-items-center">
        <span class="w0 flex-shrink-0">Show:</span>
        <span class="sc w1 flex-shrink-0 d-flex align-items-center"><input class="form-check-input tick" type="checkbox" id="sAll" checked><label for="sAll">All</label></span>
        <span class="sc w2 flex-shrink-0 d-flex align-items-center"><input class="form-check-input tick" type="checkbox" id="sErr" checked><label for="sErr">Errors</label></span>
        <span class="sc w3 flex-shrink-0 d-flex align-items-center"><input class="form-check-input tick" type="checkbox" id="sWarn" checked><label for="sWarn">Warnings</label></span>
        <span class="sc w4 flex-shrink-0 d-flex align-items-center"><input class="form-check-input tick" type="checkbox" id="sInfo" checked><label for="sInfo">Infos</label></span>
        <span class="sc w5 flex-shrink-0 d-flex align-items-center"><input class="form-check-input tick" type="checkbox" id="sAct" checked><label for="sAct">Actions</label></span>
        <button class="btn push save text-nowrap">Save Report File...</button>
      </div>
    </fieldset>
    <div class="acts d-flex">
      <button class="btn push me-auto">Run DRC...</button>
      <div class="d-flex gap-2"><button class="btn push main me-1">Plot</button><button class="btn push me-1">Close</button><button class="btn push wide">Generate Drill Files...</button></div>
    </div>
  </form>
  <svg class="grip" width="11" height="11" fill="#bbb"><path d="M8 0h3v3H8zM8 4h3v3H8zM4 4h3v3H4zM0 8h3v3H0zM4 8h3v3H4zM8 8h3v3H8z"/></svg>
</div>

<script src="https://cdn.jsdelivr.net/npm/bootstrap@5.3.0/dist/js/bootstrap.bundle.min.js"></script>
<script>
const layers=[["F.Cu","#840000"],["B.Cu","#008400"],["F.Adhes","#840084"],["B.Adhes","#000084"],["F.Paste","#840000"],["B.Paste","#00c2c2"],["F.SilkS","#008484"],["B.SilkS","#840084"],["F.Mask","#840084"],["B.Mask","#848400"],["Dwgs.User","#c2c2c2"],["Cmts.User","#000084"],["Eco1.User","#008400"],["Eco2.User","#c2c200"],["Edge.Cuts","#c2c200"],["Margin","#c200c2"],["F.CrtYd","#c2c2c2"],["B.CrtYd","#848484"],["F.Fab","#848484"],["B.Fab","#000084"]];
document.getElementById("included").innerHTML=layers.map((l,i)=>`<div class="item d-flex align-items-center"><input class="form-check-input tick big" type="checkbox" id="inc${i}" ${i?"":"checked"}><label for="inc${i}">${l[0]}</label></div>`).join("");
document.getElementById("manager").innerHTML=layers.map((l,i)=>`<div class="lrow d-flex align-items-center"><svg class="arrow" width="9" height="14">${i?"":'<path d="M1 0l6 7-6 7z" fill="#4a48f0"/>'}</svg><span class="swatch" style="background:${l[1]}"></span><input class="form-check-input tick" type="checkbox" id="lm${i}" checked><label for="lm${i}">${l[0]}</label></div>`).join("");
const opts=(id,list)=>{document.getElementById(id).innerHTML=list.map((o,i)=>`<div class="opt d-flex ${o[2]||""}"><input class="form-check-input tick" type="checkbox" id="${id}${i}" ${o[1]==1?"checked":""} ${o[1]==2?"disabled":""}><label for="${id}${i}" class="text-nowrap ${o[1]==2?"off":""}">${o[0]}</label></div>`).join("")};
opts("general",[["Plot sheet reference on all layers",0,"tight"],["Plot footprint values",1,"tight"],["Plot footprint references",1,"tight"],["Force plotting of invisible values/references",0],["Do not tent vias",0],["Exclude PCB edge layer from other layers",1],["Exclude pads from silkscreen",1],["Use auxiliary axis as origin",1],["Mirrored plot",2],["Negative plot",2],["Check zone fills before plotting",1]]);
opts("gerber",[["Use Protel filename extensions",0],["Include extended (X2) attributes",0],["Include advanced X2 features",2],["Generate Gerber job file",0],["Subtract soldermask from silkscreen",0]]);
let g="";for(let r=0;r<4;r++)for(let c=0;c<4;c++)g+=`<circle cx="${7+c*9}" cy="${7+r*9}" r="2.400"/>`;
document.getElementById("gridicon").innerHTML=g;
</script>
</body>
</html>
